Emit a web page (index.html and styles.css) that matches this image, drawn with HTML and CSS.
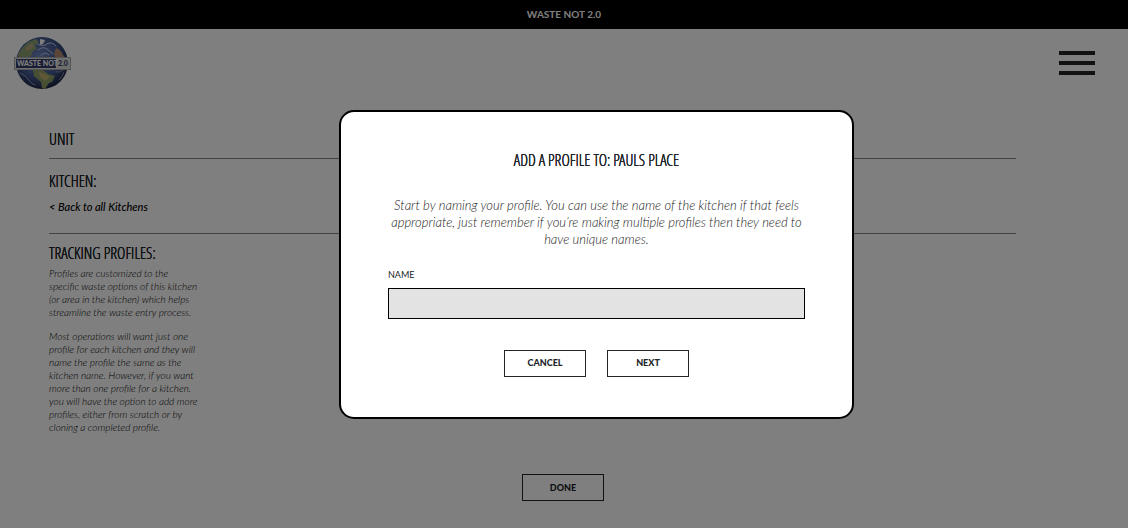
FILE: index.html
```html
<!DOCTYPE html>
<html lang="en">
<head>
<meta charset="utf-8">
<meta name="viewport" content="width=device-width, initial-scale=1">
<title>Waste Not 2.0</title>
<link rel="stylesheet" href="styles.css">
</head>
<body>
<div class="page">
  <div class="topbar">WASTE NOT 2.0</div>
  <header class="header">
    <a class="logo" href="#" aria-label="Waste Not home">
      <svg width="58" height="54" viewBox="0 0 58 54">
        <defs>
          <radialGradient id="sea" cx=".45" cy=".4" r=".6">
            <stop offset="0" stop-color="#7088c0"/>
            <stop offset=".65" stop-color="#43588f"/>
            <stop offset="1" stop-color="#1c2444"/>
          </radialGradient>
          <clipPath id="globe"><circle cx="28" cy="27" r="26"/></clipPath>
        </defs>
        <circle cx="28" cy="27" r="26" fill="url(#sea)"/>
        <g clip-path="url(#globe)">
          <path d="M8 12l6-6 8-3 3 3-4 3 2 4-4 2-2 5-5 2-2 4-5-2-1-6z" fill="#8d9e70"/>
          <path d="M12 11l6-4 2 3-4 4-4 1z" fill="#b4a67e"/>
          <path d="M42 12l4 2 5 8-2 3-7-2-2-5z" fill="#b58b70"/>
          <path d="M19 34l10 0 5 4 7 2-3 6-3 1-4 6-3-1-1-6-7-6z" fill="#8c9f62"/>
          <path d="M25 36l8 3 3 2-5 4-5-4z" fill="#c0ae72"/>
          <path d="M26 3l5 1-2 4-3 1z" fill="#fff"/>
          <g fill="none" stroke="#c4cee8" stroke-linecap="round">
            <path d="M23 8q6 3 10 0t9 2M24 14q5-4 9-1t6 5M27 19q5-4 8 0" stroke-width="1"/>
            <path d="M6 37q6 2 9 7t6 5M45 44q4-4 5-8M42 36q4 1 7-2" stroke-width="1" opacity=".6"/>
          </g>
        </g>
        <path d="M0 21h57v13H0z" fill="#aaa"/>
        <path d="M1 22h55v11H1z" fill="#ddd"/>
        <path d="M2 23h40v9H2z" fill="#343d68"/>
        <text class="logo-name" x="3" y="30">WASTE NOT</text>
        <text class="logo-version" x="44" y="30">2.0</text>
      </svg>
    </a>
    <button class="menu" type="button" aria-label="Menu">
      <span class="menu-bar"></span><span class="menu-bar"></span><span class="menu-bar"></span>
    </button>
  </header>
  <main class="main">
    <section class="row row-unit"><h2 class="title">UNIT</h2></section>
    <section class="row row-kitchen">
      <h2 class="title">KITCHEN:</h2>
      <a class="back" href="#">&lt; Back to all Kitchens</a>
    </section>
    <section class="profiles">
      <h2 class="title">TRACKING PROFILES:</h2>
      <p class="note">Profiles are customized to the<br>specific waste options of this kitchen<br>(or area in the kitchen) which helps<br>streamline the waste entry process.</p>
      <p class="note">Most operations will want just one<br>profile for each kitchen and they will<br>name the profile the same as the<br>kitchen name. However, if you want<br>more than one profile for a kitchen.<br>you will have the option to add more<br>profiles, either from scratch or by<br>cloning a completed profile.</p>
    </section>
  </main>
  <footer class="footer"><button class="button" type="button">DONE</button></footer>
</div>
<div class="overlay">
  <form class="modal" role="dialog" aria-modal="true" aria-labelledby="modal-title">
    <h1 class="title modal-title" id="modal-title">ADD A PROFILE TO: PAULS PLACE</h1>
    <p class="intro">Start by naming your profile. You can use the name of the kitchen if that feels<br>appropriate, just remember if you’re making multiple profiles then they need to<br>have unique names.</p>
    <label class="label" for="name">NAME</label>
    <input class="input" id="name" type="text">
    <div class="actions">
      <button class="button" type="button">CANCEL</button>
      <button class="button" type="submit">NEXT</button>
    </div>
  </form>
</div>
</body>
</html>
```
FILE: styles.css
```css
* { box-sizing: border-box; }
body { margin: 0; background: #fff; color: #212529; font-family: Lato, "Liberation Sans", sans-serif; }
h1, h2, p { margin: 0; }
.topbar { height: 29px; background: #000; color: #fff; font-size: 10px; font-weight: 700; line-height: 29px; text-align: center; }
.header { display: flex; justify-content: space-between; padding: 7px 33px 0 14px; }
.logo { display: block; height: 54px; }
.logo svg { display: block; }
.logo-name, .logo-version { font-family: Lato, sans-serif; font-size: 7px; font-weight: 900; }
.logo-name { fill: #fff; }
.logo-version { fill: #343d68; }
.menu { display: flex; flex-direction: column; gap: 6px; margin-top: 15px; padding: 0; border: 0; background: none; align-self: flex-start; }
.menu-bar { display: block; width: 36px; height: 4px; background: #212529; }
.main { margin: 0 112px 0 49px; padding-top: 37px; }
.title { font-family: "Open Sans Condensed Light", "Open Sans Condensed", sans-serif; font-size: 16px; font-weight: 400; line-height: 24px; text-shadow: 0 0 #212529, 0 0 #212529; white-space: nowrap; }
.row { border-bottom: 1px solid #888; }
.row-unit { height: 32px; }
.row-kitchen { height: 75px; padding-top: 10px; }
.back { display: block; margin-top: 6px; color: #000; font-size: 11px; font-style: italic; font-weight: 500; line-height: 16px; text-decoration: none; }
.profiles { padding-top: 7px; }
.note { margin-bottom: 11px; color: #000; font-size: 10px; font-style: italic; font-weight: 300; line-height: 13px; white-space: nowrap; }
.profiles .title { margin-bottom: 2px; }
.footer { display: flex; justify-content: center; padding: 29px 2px 27px 0; }
.button { width: 82px; height: 27px; padding: 0; border: 1px solid #212529; background: #fff; color: #212529; font: 900 9px/16px Lato, "Liberation Sans", sans-serif; }
.overlay { position: fixed; inset: 0; display: flex; align-items: center; justify-content: center; padding-left: 65px; background: rgba(0, 0, 0, .5); }
.modal { width: 515px; padding: 36px 47px 40px; border: 2px solid #000; border-radius: 15px; background: #fff; }
.modal-title { text-align: center; }
.intro { margin-top: 25px; color: #222; font-size: 13px; font-style: italic; font-weight: 300; line-height: 17px; text-align: center; white-space: nowrap; }
.label { display: block; margin-top: 19px; font-size: 9px; line-height: 16px; }
.input { display: block; width: 100%; height: 31px; margin-top: 5px; padding: 0 8px; border: 1px solid #000; border-radius: 0; background: #e3e3e3; font: 12px Lato, "Liberation Sans", sans-serif; }
.actions { display: flex; justify-content: center; gap: 21px; margin-top: 31px; }
```
